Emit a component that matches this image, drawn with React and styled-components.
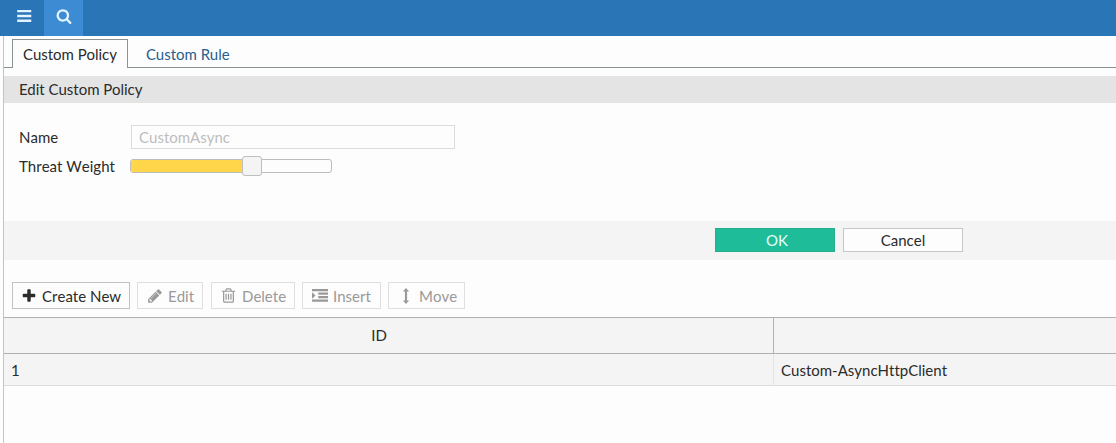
import React, { useState } from 'react';
import styled, { createGlobalStyle } from 'styled-components';

const GlobalStyle = createGlobalStyle`
  * { box-sizing: border-box; }
  body {
    margin: 0;
    background: #fdfdfd;
    color: #2b2b2b;
    font: 15px/20px Lato, "Liberation Sans", sans-serif;
    font-variant-ligatures: none;
    font-kerning: none;
    overflow: hidden;
  }
  button, input { font: inherit; font-kerning: none; }
`;

const TopBar = styled.header`
  display: flex;
  height: 36px;
  padding-left: 4px;
  background: #2a75b6;
`;

const TopButton = styled.button`
  display: flex;
  align-items: center;
  justify-content: center;
  width: ${props => props.$width}px;
  height: 36px;
  padding: 0 0 4px;
  border: 0;
  color: #e3f3ff;
  background: ${props => (props.$active ? '#3c8bd3' : 'transparent')};
`;

const Page = styled.main`
  height: 407px;
  margin-left: 3px;
  border-left: 1px solid #c4c4c4;
`;

const Tabs = styled.nav`
  display: flex;
  height: 32px;
  padding: 3px 0 0 8px;
  box-shadow: inset 0 -1px #8c9492;
`;

const Tab = styled.button`
  height: 29px;
  padding: 0 10px;
  border: 1px solid ${props => (props.$active ? '#8c9492' : 'transparent')};
  border-bottom: 0;
  color: ${props => (props.$active ? '#2b2b2b' : '#2a5f8d')};
  background: ${props => (props.$active ? '#fdfdfd' : 'transparent')};
  margin-right: 7px;
  white-space: nowrap;
  font-kerning: normal;
`;

const Heading = styled.div`
  height: 27px;
  margin-top: 8px;
  padding: 3px 15px;
  background: #e4e4e4;
  font-kerning: normal;
`;

const Form = styled.div`
  height: 118px;
  padding: 22px 15px 0;
`;

const Field = styled.div`
  display: flex;
  align-items: center;
  height: ${props => props.$height}px;
`;

const Label = styled.label`
  width: 111px;
  white-space: nowrap;
`;

const Input = styled.input`
  width: 324px;
  height: 24px;
  margin-left: 1px;
  padding: 0 7px;
  border: 1px solid #dcdcdc;
  background: #fdfdfd;
  color: #bdbdbd;
`;

const Track = styled.div`
  position: relative;
  width: 202px;
  height: 14px;
  border: 1px solid #bdbdbd;
  border-radius: 3px;
  background: #fdfdfd;
`;

const Fill = styled.div`
  height: 100%;
  border-radius: 2px 0 0 2px;
  background: #ffd54a;
`;

const Handle = styled.div`
  position: absolute;
  top: -4px;
  width: 20px;
  height: 20px;
  margin-left: -10px;
  border: 1px solid #bfbfbf;
  border-radius: 3px;
  background: #f4f4f4;
`;

const Actions = styled.div`
  display: flex;
  gap: 8px;
  height: 39px;
  padding: 7px 0 0 711px;
  background: #f4f4f4;
`;

const ActionButton = styled.button`
  width: 120px;
  height: 24px;
  padding: 0 0 0 ${props => (props.$primary ? 4 : 0)}px;
  line-height: 22px;
  border: 1px solid ${props => (props.$primary ? '#27ad8b' : '#c6c6c6')};
  color: ${props => (props.$primary ? '#e6fff7' : '#2b2b2b')};
  background: ${props => (props.$primary ? '#1fbc99' : '#fdfdfd')};
`;

const Toolbar = styled.div`
  display: flex;
  height: 57px;
  padding: 22px 0 0 8px;
`;

const ToolButton = styled.button`
  display: flex;
  align-items: center;
  width: ${props => props.$width}px;
  height: 27px;
  margin-right: ${props => props.$gap}px;
  padding: 0 0 0 ${props => props.$pad}px;
  border: 1px solid ${props => (props.disabled ? '#dfdfdf' : '#c2c2c2')};
  color: ${props => (props.disabled ? '#999' : '#2b2b2b')};
  background: #fdfdfd;
  white-space: nowrap;

  svg { flex: none; margin-right: ${props => props.$space}px; }
`;

const Row = styled.div`
  display: grid;
  grid-template-columns: 770px 1fr;
  height: ${props => (props.$head ? 37 : 32)}px;
  border-top: ${props => (props.$head ? '1px solid #b0b0b0' : '0')};
  border-bottom: 1px solid ${props => (props.$head ? '#b0b0b0' : '#dcdcdc')};
  background: #f4f4f4;
`;

const Cell = styled.div`
  display: flex;
  align-items: center;
  justify-content: ${props => (props.$head ? 'center' : 'flex-start')};
  padding: ${props => (props.$head ? '0 26px 2px 7px' : '0 7px')};
  border-right: 1px solid ${props => (props.$head ? '#b0b0b0' : '#e4e4e4')};

  &:last-child { border-right: 0; }
`;

const icons = {
  bars: 'M128 200h1480v260h-1480zM128 710h1480v260h-1480zM128 1220h1480v260h-1480z',
  search: 'M1216 832q0-185-131.5-316.5t-316.5-131.5-316.5 131.5-131.5 316.5 131.5 316.5 316.5 131.5 316.5-131.5 131.5-316.5zm512 832q0 52-38 90t-90 38q-54 0-90-38l-343-342q-179 124-399 124-143 0-273.5-55.5t-225-150-150-225-55.5-273.5 55.5-273.5 150-225 225-150 273.5-55.5 273.5 55.5 225 150 150 225 55.5 273.5q0 220-124 399l343 343q37 37 37 90z',
  plus: 'M1600 736v192q0 40-28 68t-68 28h-416v416q0 40-28 68t-68 28h-192q-40 0-68-28t-28-68v-416h-416q-40 0-68-28t-28-68v-192q0-40 28-68t68-28h416v-416q0-40 28-68t68-28h192q40 0 68 28t28 68v416h416q40 0 68 28t28 68z',
  pencil: 'M491 1536l91-91-235-235-91 91v107h128v128h107zm523-928q0-22-22-22-10 0-17 7l-542 542q-7 7-7 17 0 22 22 22 10 0 17-7l542-542q7-7 7-17zm-54-192l416 416-832 832h-416v-416zm683 96q0 53-37 90l-166 166-416-416 166-165q36-38 90-38 53 0 91 38l235 234q37 39 37 91z',
  trash: 'M704 736v576q0 14-9 23t-23 9h-64q-14 0-23-9t-9-23v-576q0-14 9-23t23-9h64q14 0 23 9t9 23zm256 0v576q0 14-9 23t-23 9h-64q-14 0-23-9t-9-23v-576q0-14 9-23t23-9h64q14 0 23 9t9 23zm256 0v576q0 14-9 23t-23 9h-64q-14 0-23-9t-9-23v-576q0-14 9-23t23-9h64q14 0 23 9t9 23zm128 724v-948h-896v948q0 22 7 40.5t14.5 27 10.5 8.5h832q3 0 10.5-8.5t14.5-27 7-40.5zm-672-1076h448l-48-117q-7-9-17-11h-317q-10 2-17 11zm928 32v64q0 14-9 23t-23 9h-96v948q0 83-47 143.5t-113 60.5h-832q-66 0-113-58.5t-47-141.5v-952h-96q-14 0-23-9t-9-23v-64q0-14 9-23t23-9h309l70-167q15-37 54-63t79-26h320q40 0 79 26t54 63l70 167h309q14 0 23 9t9 23z',
  indent: 'M0 112h1792v260h-1792zM704 504h1088v260h-1088zM704 896h1088v260h-1088zM0 1288h1792v260h-1792zM0 464l400 366-400 366z',
  arrows: 'M896 0l340 400h-220v992h220l-340 400-340-400h220v-992h-220z',
};

function Icon({ name, size }) {
  return (
    <svg width={size} height={size} viewBox="0 0 1792 1792" fill="currentColor" aria-hidden="true">
      <path d={icons[name]} />
    </svg>
  );
}

const tools = [
  { text: 'Create New', icon: 'plus', width: 118, gap: 7, pad: 8, size: 16, space: 5 },
  { text: 'Edit', icon: 'pencil', width: 66, gap: 8, pad: 9, size: 16, space: 5, disabled: true },
  { text: 'Delete', icon: 'trash', width: 84, gap: 7, pad: 8, size: 17, space: 5, disabled: true },
  { text: 'Insert', icon: 'indent', width: 79, gap: 7, pad: 9, size: 16, space: 5, disabled: true },
  { text: 'Move', icon: 'arrows', width: 77, gap: 0, pad: 9, size: 16, space: 5, disabled: true },
];

function App() {
  const [tab, setTab] = useState(0);
  const weight = 60.5;

  return (
    <>
      <GlobalStyle />
      <TopBar>
        <TopButton $width={40} aria-label="Menu"><Icon name="bars" size={17} /></TopButton>
        <TopButton $width={39} $active aria-label="Search"><Icon name="search" size={16} /></TopButton>
      </TopBar>
      <Page>
        <Tabs>
          {['Custom Policy', 'Custom Rule'].map((name, i) => (
            <Tab key={name} $active={tab === i} onClick={() => setTab(i)}>{name}</Tab>
          ))}
        </Tabs>
        <Heading>Edit Custom Policy</Heading>
        <Form>
          <Field $height={24}>
            <Label>Name</Label>
            <Input defaultValue="CustomAsync" disabled />
          </Field>
          <Field $height={34}>
            <Label>Threat Weight</Label>
            <Track>
              <Handle style={{ left: weight + '%' }} />
              <Fill style={{ width: weight + '%' }} />
            </Track>
          </Field>
        </Form>
        <Actions>
          <ActionButton $primary>OK</ActionButton>
          <ActionButton>Cancel</ActionButton>
        </Actions>
        <Toolbar>
          {tools.map(t => (
            <ToolButton key={t.text} $width={t.width} $gap={t.gap} $pad={t.pad} $space={t.space} disabled={t.disabled}>
              <Icon name={t.icon} size={t.size} />
              {t.text}
            </ToolButton>
          ))}
        </Toolbar>
        <Row $head>
          <Cell $head>ID</Cell>
          <Cell $head />
        </Row>
        <Row>
          <Cell>1</Cell>
          <Cell>Custom-AsyncHttpClient</Cell>
        </Row>
      </Page>
    </>
  );
}

export default App;
